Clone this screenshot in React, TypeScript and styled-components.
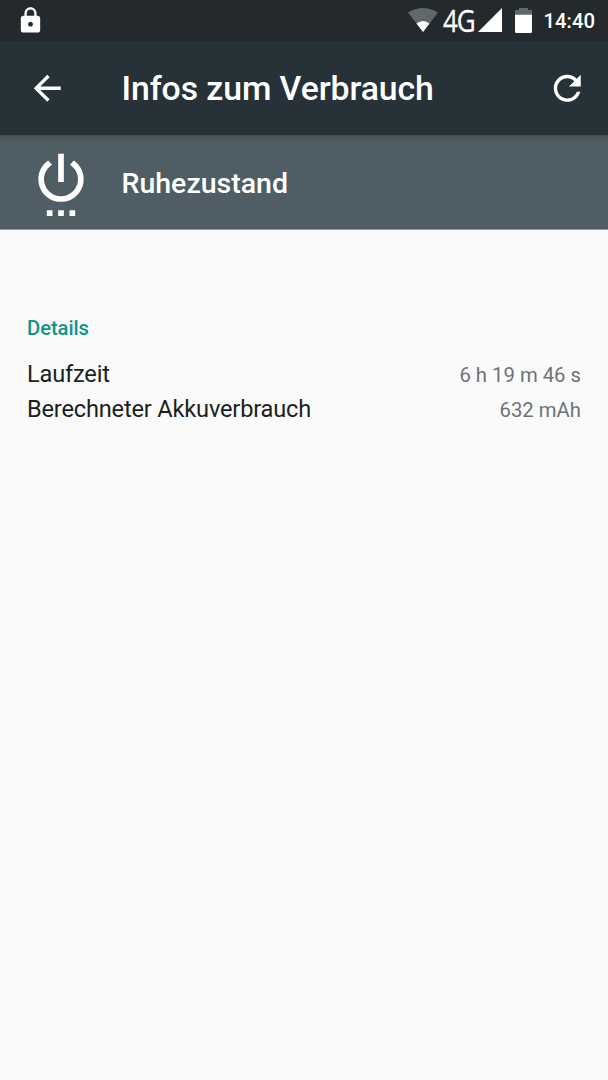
import React from "react";
import styled, { createGlobalStyle } from "styled-components";

const GlobalStyle = createGlobalStyle`
  * { box-sizing: border-box; }
  body { margin: 0; background: #fafafa; font-family: Roboto, "Liberation Sans", sans-serif; }
`;

const Screen = styled.div`
  width: 608px;
  height: 1080px;
  display: flex;
  flex-direction: column;
  background: #fafafa;
  overflow: hidden;
`;

const StatusBar = styled.header`
  height: 41px;
  flex: none;
  display: flex;
  align-items: flex-start;
  padding: 0 13px 0 16px;
  background: #23292c;
  color: #fff;
`;

const StatusIcon = styled.svg<{ $top: number; $left?: number }>`
  flex: none;
  display: block;
  margin: ${(p) => p.$top}px 0 0 ${(p) => p.$left ?? 0}px;
`;

const Spacer = styled.div`
  flex: 1;
`;

const Network = styled.div`
  width: 35px;
  height: 41px;
  padding-left: 5px;
  font: 400 31px/41px "Open Sans", "Noto Sans", sans-serif;
  letter-spacing: -1.5px;
  white-space: nowrap;
  -webkit-text-stroke: 0.3px #fff;
`;

const NetworkLabel = styled.span`
  display: inline-block;
  transform: scaleX(0.84);
  transform-origin: 0 50%;
`;

const Clock = styled.time`
  margin-left: 12px;
  font-size: 20.3px;
  font-weight: 500;
  line-height: 43px;
`;

const AppBar = styled.div`
  height: 94px;
  flex: none;
  display: flex;
  align-items: center;
  padding: 0 20px 0 27px;
  background: #273238;
  color: #fff;
`;

const IconButton = styled.button`
  width: 41px;
  height: 41px;
  padding: 0;
  border: 0;
  background: none;
  color: inherit;
  svg { display: block; }
`;

const Title = styled.h1`
  flex: 1;
  margin: 2px 0 0 53.5px;
  font-size: 33.8px;
  font-weight: 500;
  line-height: 40px;
  letter-spacing: -0.08px;
  white-space: nowrap;
`;

const EntryHeader = styled.section`
  height: 95px;
  flex: none;
  display: flex;
  align-items: center;
  padding-left: 27px;
  border-bottom: 1px solid #949c9f;
  background: linear-gradient(#424d53 0, #49565c 3px, #4f5e65 8px, #4f5e65 93px, #47565c 94px);
  color: #fff;
`;

const EntryName = styled.h2`
  margin: 4px 0 0 26.5px;
  font-size: 28.5px;
  font-weight: 500;
  line-height: 34px;
`;

const Details = styled.main`
  padding: 86px 27px 0;
`;

const SectionTitle = styled.h3`
  margin: 0 0 16px;
  font-size: 20.3px;
  font-weight: 500;
  line-height: 25px;
  letter-spacing: -0.1px;
  color: #0f9688;
`;

const Row = styled.div`
  height: 35px;
  display: flex;
  justify-content: space-between;
  align-items: baseline;
  line-height: 35px;
`;

const Label = styled.span`
  font-size: 23.6px;
  letter-spacing: -0.18px;
  color: #1c1f20;
`;

const Value = styled.span`
  font-size: 20.3px;
  color: #6e7375;
`;

const rows = [
  { label: "Laufzeit", value: "6 h 19 m 46 s" },
  { label: "Berechneter Akkuverbrauch", value: "632 mAh" },
];

export default function App() {
  return (
    <>
      <GlobalStyle />
      <Screen>
        <StatusBar>
          <StatusIcon $top={6} width="29" height="29" viewBox="0 0 24 24" fill="#fff">
            <path d="M18 8h-1V6c0-2.760-2.240-5-5-5S7 3.240 7 6v2H6c-1.100 0-2 .9-2 2v10c0 1.100.9 2 2 2h12c1.100 0 2-.9 2-2V10c0-1.100-.9-2-2-2zm-6 9c-1.100 0-2-.9-2-2s.9-2 2-2 2 .9 2 2-.9 2-2 2zm3.100-9H8.900V6c0-1.710 1.390-3.100 3.100-3.100s3.100 1.390 3.100 3.100v2z" />
          </StatusIcon>
          <Spacer />
          <StatusIcon $top={7} width="30" height="26" viewBox="0 0 30 26">
            <path d="M0 5.500Q15-3.500 30 5.500L15 25Z" fill="#60686b" />
            <path d="M8.500 16.500Q15 11.500 21.500 16.500L15 25Z" fill="#fff" />
          </StatusIcon>
          <Network>
            <NetworkLabel>4G</NetworkLabel>
          </Network>
          <StatusIcon $top={8} $left={5} width="24" height="24" viewBox="0 0 24 24">
            <path d="M24 0V24H0Z" fill="#fff" />
          </StatusIcon>
          <StatusIcon $top={8} $left={13} width="17" height="25" viewBox="0 0 17 25">
            <path d="M4 0h9v2h4v5H0V2h4z" fill="#60686b" />
            <path d="M0 6.800h17V23.500q0 1.500-1.500 1.500h-14Q0 25 0 23.500z" fill="#fff" />
          </StatusIcon>
          <Clock>14:40</Clock>
        </StatusBar>
        <AppBar>
          <IconButton aria-label="Zurück">
            <svg width="40.5" height="40.5" viewBox="0 0 24 24" fill="currentColor">
              <path d="M20 11H7.830l5.590-5.590L12 4l-8 8 8 8 1.410-1.410L7.830 13H20v-2z" />
            </svg>
          </IconButton>
          <Title>Infos zum Verbrauch</Title>
          <IconButton aria-label="Aktualisieren">
            <svg width="40.5" height="40.5" viewBox="0 0 24 24" fill="currentColor">
              <path d="M17.650 6.350C16.200 4.900 14.210 4 12 4c-4.420 0-7.990 3.580-7.990 8s3.570 8 7.990 8c3.730 0 6.840-2.550 7.730-6h-2.080c-.82 2.330-3.040 4-5.650 4-3.310 0-6-2.690-6-6s2.690-6 6-6c1.660 0 3.140.69 4.220 1.780L13 11h7V4l-2.350 2.350z" />
            </svg>
          </IconButton>
        </AppBar>
        <EntryHeader>
          <svg width="68" height="68" viewBox="0 0 24 24" fill="#fff">
            <path d="M7 24h2v-2H7v2zm4 0h2v-2h-2v2zm2-22h-2v10h2V2zm3.560 2.440l-1.450 1.450C16.840 6.940 18 8.830 18 11c0 3.310-2.690 6-6 6s-6-2.690-6-6c0-2.170 1.160-4.060 2.880-5.120L7.440 4.440C5.360 5.880 4 8.280 4 11c0 4.420 3.580 8 8 8s8-3.580 8-8c0-2.720-1.360-5.120-3.440-6.560zM15 24h2v-2h-2v2z" />
          </svg>
          <EntryName>Ruhezustand</EntryName>
        </EntryHeader>
        <Details>
          <SectionTitle>Details</SectionTitle>
          {rows.map((r) => (
            <Row key={r.label}>
              <Label>{r.label}</Label>
              <Value>{r.value}</Value>
            </Row>
          ))}
        </Details>
      </Screen>
    </>
  );
}
